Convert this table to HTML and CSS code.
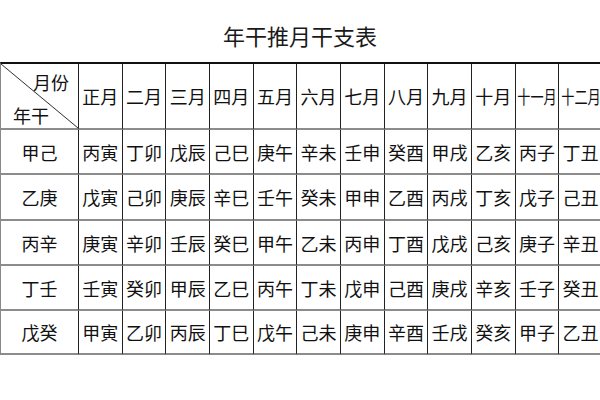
FILE: index.html
```html
<!DOCTYPE html>
<html lang="zh">
<head>
<meta charset="utf-8">
<title>年干推月干支表</title>
<link rel="stylesheet" href="styles.css">
</head>
<body>
<h1 class="title">年干推月干支表</h1>
<div class="grid">
  <div class="cell corner"><span class="c-top">月份</span><span class="c-bot">年干</span></div>
  <div class="cell">正月</div>
  <div class="cell">二月</div>
  <div class="cell">三月</div>
  <div class="cell">四月</div>
  <div class="cell">五月</div>
  <div class="cell">六月</div>
  <div class="cell">七月</div>
  <div class="cell">八月</div>
  <div class="cell">九月</div>
  <div class="cell">十月</div>
  <div class="cell"><span class="narrow">十一月</span></div>
  <div class="cell"><span class="narrow">十二月</span></div>

  <div class="cell">甲己</div>
  <div class="cell">丙寅</div><div class="cell">丁卯</div><div class="cell">戊辰</div><div class="cell">己巳</div><div class="cell">庚午</div><div class="cell">辛未</div><div class="cell">壬申</div><div class="cell">癸酉</div><div class="cell">甲戌</div><div class="cell">乙亥</div><div class="cell">丙子</div><div class="cell">丁丑</div>

  <div class="cell">乙庚</div>
  <div class="cell">戊寅</div><div class="cell">己卯</div><div class="cell">庚辰</div><div class="cell">辛巳</div><div class="cell">壬午</div><div class="cell">癸未</div><div class="cell">甲申</div><div class="cell">乙酉</div><div class="cell">丙戌</div><div class="cell">丁亥</div><div class="cell">戊子</div><div class="cell">己丑</div>

  <div class="cell">丙辛</div>
  <div class="cell">庚寅</div><div class="cell">辛卯</div><div class="cell">壬辰</div><div class="cell">癸巳</div><div class="cell">甲午</div><div class="cell">乙未</div><div class="cell">丙申</div><div class="cell">丁酉</div><div class="cell">戊戌</div><div class="cell">己亥</div><div class="cell">庚子</div><div class="cell">辛丑</div>

  <div class="cell">丁壬</div>
  <div class="cell">壬寅</div><div class="cell">癸卯</div><div class="cell">甲辰</div><div class="cell">乙巳</div><div class="cell">丙午</div><div class="cell">丁未</div><div class="cell">戊申</div><div class="cell">己酉</div><div class="cell">庚戌</div><div class="cell">辛亥</div><div class="cell">壬子</div><div class="cell">癸丑</div>

  <div class="cell">戊癸</div>
  <div class="cell">甲寅</div><div class="cell">乙卯</div><div class="cell">丙辰</div><div class="cell">丁巳</div><div class="cell">戊午</div><div class="cell">己未</div><div class="cell">庚申</div><div class="cell">辛酉</div><div class="cell">壬戌</div><div class="cell">癸亥</div><div class="cell">甲子</div><div class="cell">乙丑</div>
</div>
</body>
</html>
```

FILE: styles.css
```css
html, body {
  margin: 0;
  padding: 0;
  background: #ffffff;
}
body {
  width: 600px;
  height: 400px;
  overflow: hidden;
  font-family: "Noto Sans CJK SC", "Noto Sans", sans-serif;
  color: #111;
}
.title {
  box-sizing: border-box;
  height: 62px;
  margin: 0;
  padding-top: 20px;
  font-size: 22px;
  line-height: 30px;
  font-weight: normal;
  text-align: center;
  color: #1a1a1a;
}
.grid {
  display: grid;
  width: 602px;
  grid-template-columns: 78px repeat(12, 43.67px);
  grid-template-rows: 66px 45px 46px 45px 45px 44px;
  border-top: 2px solid #111;
  border-left: 1px solid #888;
  box-sizing: border-box;
}
.cell {
  box-sizing: border-box;
  border-right: 1px solid #222;
  border-bottom: 2px solid #8c8c8c;
  display: flex;
  align-items: center;
  justify-content: center;
  font-size: 18px;
  line-height: 1;
  white-space: nowrap;
}
.narrow {
  display: inline-block;
  transform: scaleX(0.73);
}
.corner {
  flex-direction: column;
  align-items: stretch;
  justify-content: space-between;
  padding: 9px 9px 4px 12px;
  font-size: 18px;
  background: linear-gradient(to top right, transparent calc(50% - 0.8px), #333 50%, transparent calc(50% + 0.8px));
}
.c-top {
  align-self: flex-end;
}
.c-bot {
  align-self: flex-start;
}
```
